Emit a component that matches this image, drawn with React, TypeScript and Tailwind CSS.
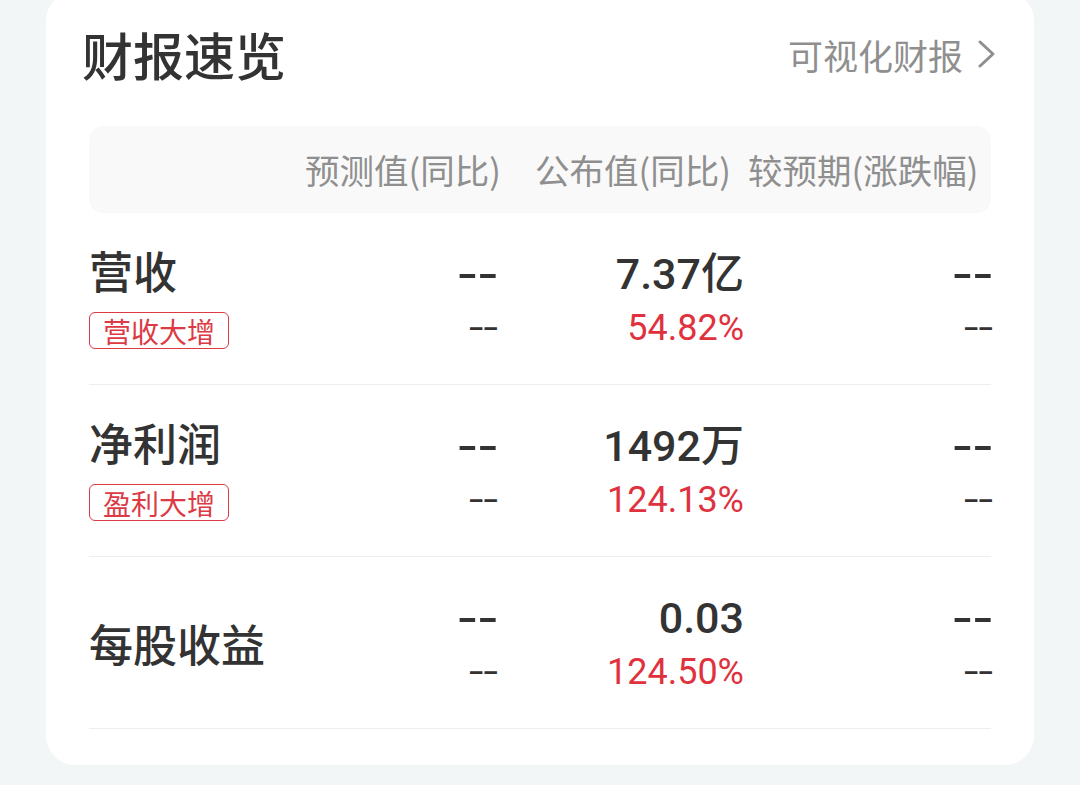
import React from 'react';

interface Metric {
  label: string;
  tag?: string;
  forecast: string;
  forecastYoy: string;
  actual: string;
  actualYoy: string;
  diff: string;
  diffSub: string;
}

const METRICS: Metric[] = [
  { label: '营收', tag: '营收大增', forecast: '--', forecastYoy: '--', actual: '7.37亿', actualYoy: '54.82%', diff: '--', diffSub: '--' },
  { label: '净利润', tag: '盈利大增', forecast: '--', forecastYoy: '--', actual: '1492万', actualYoy: '124.13%', diff: '--', diffSub: '--' },
  { label: '每股收益', forecast: '--', forecastYoy: '--', actual: '0.03', actualYoy: '124.50%', diff: '--', diffSub: '--' },
];

const CJK = "font-['Noto_Sans_CJK_SC','Noto_Sans',sans-serif]";
const NUM = "font-['Roboto','Noto_Sans_CJK_SC',sans-serif]";

// empty values are drawn as a stretched "--"
const Big: React.FC<{ text: string }> = ({ text }) =>
  text === '--' ? (
    <span className="-mr-[2px] inline-block origin-right scale-x-[1.4] font-medium">{text}</span>
  ) : (
    <span className="font-medium">{text}</span>
  );

const Small: React.FC<{ text: string; red?: boolean }> = ({ text, red }) =>
  text === '--' ? (
    <span className="-mr-[2px] inline-block origin-right scale-x-[1.45] text-[#333333]">{text}</span>
  ) : (
    <span className={red ? 'text-[#e0323e]' : 'text-[#333333]'}>{text}</span>
  );

const ValueCell: React.FC<{ top: string; bottom: string; red?: boolean }> = ({ top, bottom, red }) => (
  <div className={`flex flex-col items-end gap-[14px] ${NUM}`}>
    <div className="h-[44px] text-[43px] leading-[44px] text-[#333333] whitespace-nowrap">
      <Big text={top} />
    </div>
    <div className="h-[36px] text-[36px] leading-[36px] whitespace-nowrap">
      <Small text={bottom} red={red} />
    </div>
  </div>
);

const Row: React.FC<{ m: Metric }> = ({ m }) => (
  <div className="grid h-[172px] grid-cols-[1fr_200px_248px_247px] items-center border-b border-[#eeeeee]">
    <div className={`flex flex-col items-start gap-[20px] ${CJK}`}>
      <div className="text-[44px] leading-[44px] font-medium text-[#333333] whitespace-nowrap">{m.label}</div>
      {m.tag && (
        <div className="flex h-[37px] items-center rounded-[6px] border-[1.5px] border-[#dc3a44] px-[13px] text-[28px] leading-none text-[#dc3a44]">
          {m.tag}
        </div>
      )}
    </div>
    <ValueCell top={m.forecast} bottom={m.forecastYoy} />
    <ValueCell top={m.actual} bottom={m.actualYoy} red />
    <ValueCell top={m.diff} bottom={m.diffSub} />
  </div>
);

export default function App() {
  return (
    <div className="h-[785px] w-[1080px] overflow-hidden bg-[#f3f6f7] px-[46px]">
      <div className="-mt-[9px] rounded-[30px] bg-white px-[36px] pb-[36px]">
        {/* title */}
        <div className={`flex h-[130px] items-center justify-between pb-[4px] ${CJK}`}>
          <div className="text-[51px] font-medium leading-none text-[#333333]">财报速览</div>
          <div className="mr-[2px] flex items-center gap-[14px] text-[35px] leading-none text-[#8f8f8f]">
            <span>可视化财报</span>
            <svg width="19" height="28" viewBox="0 0 19 28" fill="none">
              <polyline points="3,2 16,14 3,26" stroke="#8f8f8f" strokeWidth="3" strokeLinecap="round" strokeLinejoin="round" />
            </svg>
          </div>
        </div>

        <div className="mx-[7px] mt-[5px]">
          {/* header */}
          <div className={`grid h-[87px] grid-cols-[1fr_230px_230px_230px] items-center rounded-[14px] bg-[#f9f9f9] pr-[13px] text-[34.5px] leading-none text-[#8f8f8f] ${CJK}`}>
            <div />
            <div className="text-center whitespace-nowrap">预测值(同比)</div>
            <div className="text-center whitespace-nowrap">公布值(同比)</div>
            <div className="text-center whitespace-nowrap">较预期(涨跌幅)</div>
          </div>

          {METRICS.map((m) => (
            <Row key={m.label} m={m} />
          ))}
        </div>
      </div>
    </div>
  );
}
